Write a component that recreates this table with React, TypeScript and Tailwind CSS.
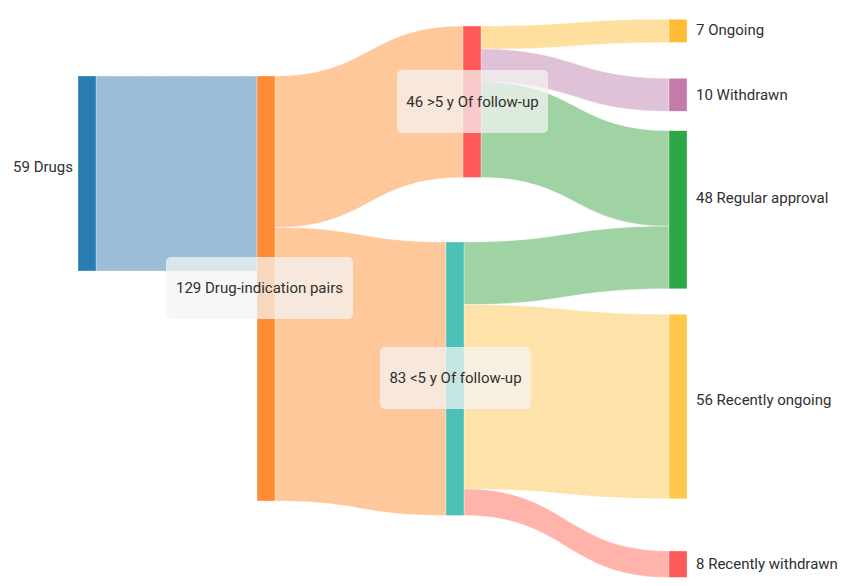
type Link = {
  x0: number;
  x1: number;
  s0: number;
  s1: number;
  t0: number;
  t1: number;
  color: string;
};

type Node = { x: number; y0: number; y1: number; color: string };

type Label = { text: string; x: number; y: number; anchor: "start" | "end" };

type BoxLabel = { text: string; x: number; y: number; w: number; h: number };

const NODE_W = 18;

const nodes: Node[] = [
  { x: 78, y0: 76, y1: 271, color: "#2a7db3" },
  { x: 257, y0: 76, y1: 501, color: "#ff8c35" },
  { x: 463, y0: 26, y1: 177.5, color: "#ff5a5a" },
  { x: 446, y0: 242, y1: 515.5, color: "#4cc1b8" },
  { x: 669, y0: 19.3, y1: 42.4, color: "#ffbb33" },
  { x: 669, y0: 78.3, y1: 111.2, color: "#c27baa" },
  { x: 669, y0: 130.7, y1: 288.8, color: "#2ea846" },
  { x: 669, y0: 314.3, y1: 498.8, color: "#ffc84b" },
  { x: 669, y0: 551, y1: 577.4, color: "#ff5a5a" },
];

const links: Link[] = [
  { x0: 96, x1: 257, s0: 76, s1: 271, t0: 76, t1: 271, color: "#9bbdd8" },
  { x0: 275, x1: 463, s0: 76, s1: 227.5, t0: 26, t1: 177.5, color: "#ffc89b" },
  { x0: 275, x1: 446, s0: 227.5, s1: 501, t0: 242, t1: 515.5, color: "#ffc89b" },
  { x0: 481, x1: 669, s0: 26, s1: 49.1, t0: 19.3, t1: 42.4, color: "#fedf9e" },
  { x0: 481, x1: 669, s0: 49.1, s1: 82, t0: 78.3, t1: 111.2, color: "#e0c2d8" },
  { x0: 481, x1: 669, s0: 82, s1: 177.5, t0: 130.7, t1: 226.2, color: "#a0d3a4" },
  { x0: 464, x1: 669, s0: 242, s1: 304.6, t0: 226.2, t1: 288.8, color: "#a0d3a4" },
  { x0: 464, x1: 669, s0: 304.6, s1: 489.1, t0: 314.3, t1: 498.8, color: "#fde3aa" },
  { x0: 464, x1: 669, s0: 489.1, s1: 515.5, t0: 551, t1: 577.4, color: "#ffb3ab" },
];

const sideLabels: Label[] = [
  { text: "59 Drugs", x: 73, y: 167, anchor: "end" },
  { text: "7 Ongoing", x: 696, y: 30, anchor: "start" },
  { text: "10 Withdrawn", x: 696, y: 95, anchor: "start" },
  { text: "48 Regular approval", x: 696, y: 198, anchor: "start" },
  { text: "56 Recently ongoing", x: 696, y: 400, anchor: "start" },
  { text: "8 Recently withdrawn", x: 696, y: 564, anchor: "start" },
];

const boxLabels: BoxLabel[] = [
  { text: "129 Drug-indication pairs", x: 166, y: 257, w: 187, h: 62 },
  { text: "46 >5 y Of follow-up", x: 397, y: 70, w: 151, h: 63 },
  { text: "83 <5 y Of follow-up", x: 380, y: 347, w: 151, h: 62 },
];

function linkPath(l: Link) {
  const xm = (l.x0 + l.x1) / 2;
  return [
    `M${l.x0},${l.s0}`,
    `C${xm},${l.s0} ${xm},${l.t0} ${l.x1},${l.t0}`,
    `L${l.x1},${l.t1}`,
    `C${xm},${l.t1} ${xm},${l.s1} ${l.x0},${l.s1}`,
    "Z",
  ].join(" ");
}

function Sankey() {
  return (
    <svg width={850} height={586} viewBox="0 0 850 586" className="block">
      {/* links */}
      <g>
        {links.map((l, i) => (
          <path key={i} d={linkPath(l)} fill={l.color} stroke="#ffffff" strokeWidth={0.5} strokeOpacity={0.6} />
        ))}
      </g>

      {/* nodes */}
      <g>
        {nodes.map((n, i) => (
          <rect
            key={i}
            x={n.x}
            y={n.y0}
            width={NODE_W}
            height={n.y1 - n.y0}
            fill={n.color}
            stroke="#ffffff"
            strokeWidth={0.5}
            strokeOpacity={0.6}
          />
        ))}
      </g>

      {/* labels */}
      <g fill="#2f2f2f" fontSize={15} style={{ fontFamily: "Roboto, 'Noto Sans', sans-serif" }}>
        {sideLabels.map((t) => (
          <text key={t.text} x={t.x} y={t.y} textAnchor={t.anchor} dominantBaseline="central">
            {t.text}
          </text>
        ))}
        {boxLabels.map((b) => (
          <g key={b.text}>
            <rect x={b.x} y={b.y} width={b.w} height={b.h} rx={5} fill="#f4f4f4" fillOpacity={0.72} />
            <text x={b.x + b.w / 2} y={b.y + b.h / 2} textAnchor="middle" dominantBaseline="central">
              {b.text}
            </text>
          </g>
        ))}
      </g>
    </svg>
  );
}

export default function App() {
  return (
    <div className="h-[586px] w-[850px] overflow-hidden bg-white">
      <Sankey />
    </div>
  );
}
